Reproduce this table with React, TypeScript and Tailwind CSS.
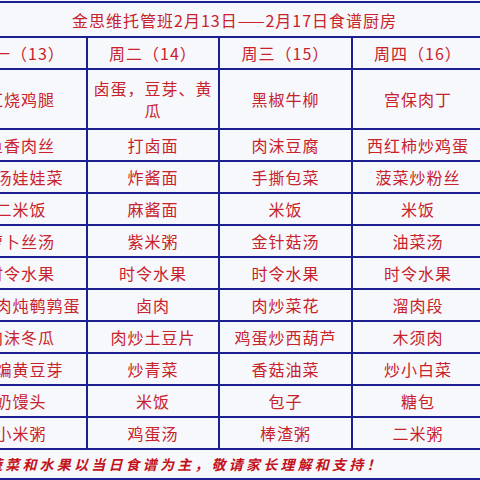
const ROWS: string[][] = [
  ['周一（13）', '周二（14）', '周三（15）', '周四（16）'],
  ['红烧鸡腿', '卤蛋，豆芽、黄瓜', '黑椒牛柳', '宫保肉丁'],
  ['鱼香肉丝', '打卤面', '肉沫豆腐', '西红柿炒鸡蛋'],
  ['上汤娃娃菜', '炸酱面', '手撕包菜', '菠菜炒粉丝'],
  ['二米饭', '麻酱面', '米饭', '米饭'],
  ['萝卜丝汤', '紫米粥', '金针菇汤', '油菜汤'],
  ['时令水果', '时令水果', '时令水果', '时令水果'],
  ['红烧肉炖鹌鹑蛋', '卤肉', '肉炒菜花', '溜肉段'],
  ['肉沫冬瓜', '肉炒土豆片', '鸡蛋炒西葫芦', '木须肉'],
  ['干煸黄豆芽', '炒青菜', '香菇油菜', '炒小白菜'],
  ['奶馒头', '米饭', '包子', '糖包'],
  ['小米粥', '鸡蛋汤', '棒渣粥', '二米粥'],
];

export default function App() {
  return (
    <div className="w-[480px] h-[480px] overflow-hidden bg-[#f7f8fb] font-['Noto_Sans_CJK_SC',sans-serif] text-[#c8222b]">
      <div className="mt-px -ml-[46px] w-max grid grid-cols-[130px_130px_131px_130px] grid-rows-[33px_30px_58px_repeat(10,30px)_28px] gap-[2px] border-2 border-[#1c1f8f] bg-[#1c1f8f]">
        {/* Title */}
        <div className="col-span-4 bg-[#f7f8fb] flex items-center pl-[116px] text-[16px] tracking-[1px] whitespace-nowrap">
          金思维托管班2月13日——2月17日食谱厨房
        </div>

        {ROWS.map((row, r) =>
          row.map((cell, c) => (
            <div
              key={`${r}-${c}`}
              className="bg-[#f7f8fb] flex items-center justify-center text-center px-1 text-[16px] leading-[22px] tracking-[1px]"
            >
              {cell}
            </div>
          ))
        )}

        {/* Footer note */}
        <div className="col-span-4 bg-[#f7f8fb] flex items-center pl-[32px] text-[14px] font-bold italic tracking-[3.2px] whitespace-nowrap text-[#c4121c]">
          蔬菜和水果以当日食谱为主，敬请家长理解和支持！
        </div>
      </div>
    </div>
  );
}
